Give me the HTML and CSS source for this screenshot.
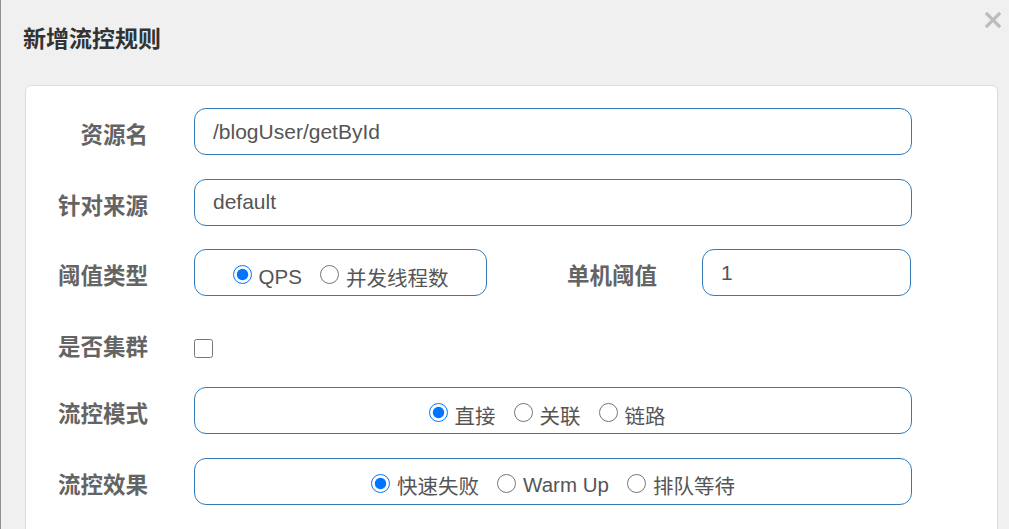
FILE: index.html
```html
<!DOCTYPE html>
<html lang="zh-CN">

<head>
  <meta charset="UTF-8">
  <meta name="viewport" content="width=device-width, initial-scale=1.0">
  <title>新增流控规则</title>
  <link rel="stylesheet" href="styles.css">
</head>

<body>
  <div class="modal">
    <div class="modal-header">
      <h3 class="modal-title">新增流控规则</h3>
      <button class="close-btn" type="button" aria-label="close">
        <svg width="16" height="16" viewBox="0 0 16 16">
          <path d="M2 2 L14 14 M14 2 L2 14" stroke="#bdbdbd" stroke-width="3.2" stroke-linecap="square" />
        </svg>
      </button>
    </div>
    <div class="panel">
      <div class="form-row">
        <label class="form-label">资源名</label>
        <input class="form-input" type="text" value="/blogUser/getById">
      </div>
      <div class="form-row">
        <label class="form-label">针对来源</label>
        <input class="form-input" type="text" value="default">
      </div>
      <div class="form-row">
        <label class="form-label">阈值类型</label>
        <div class="split">
          <div class="radio-box">
            <label class="radio"><input type="radio" name="grade" checked>QPS</label>
            <label class="radio"><input type="radio" name="grade">并发线程数</label>
          </div>
          <label class="form-label inner-label">单机阈值</label>
          <input class="form-input" type="text" value="1">
        </div>
      </div>
      <div class="form-row check-row">
        <label class="form-label">是否集群</label>
        <div><input class="checkbox" type="checkbox"></div>
      </div>
      <div class="form-row">
        <label class="form-label">流控模式</label>
        <div class="radio-box mode-box">
          <label class="radio"><input type="radio" name="strategy" checked>直接</label>
          <label class="radio"><input type="radio" name="strategy">关联</label>
          <label class="radio"><input type="radio" name="strategy">链路</label>
        </div>
      </div>
      <div class="form-row">
        <label class="form-label">流控效果</label>
        <div class="radio-box">
          <label class="radio"><input type="radio" name="behavior" checked>快速失败</label>
          <label class="radio"><input type="radio" name="behavior">Warm Up</label>
          <label class="radio"><input type="radio" name="behavior">排队等待</label>
        </div>
      </div>
    </div>
  </div>
</body>

</html>
```

FILE: styles.css
```css
html,
body {
  height: 100%;
}

body {
  margin: 0;
  background-color: #f0f0f0;
  font-family: "Liberation Sans", "Noto Sans CJK SC", sans-serif;
  overflow: hidden;
}

.modal {
  position: relative;
  height: 100%;
  border-left: 1px solid #8f8f8f;
  box-sizing: border-box;
}

.modal-header {
  padding: 22px 0 0 22px;
  height: 85px;
  box-sizing: border-box;
}

.modal-title {
  margin: 0;
  font-size: 23px;
  line-height: 34px;
  font-weight: bold;
  color: #333;
}

.close-btn {
  position: absolute;
  top: 12px;
  right: 8px;
  padding: 0;
  border: none;
  background: transparent;
  cursor: pointer;
}

.close-btn svg {
  display: block;
}

.panel {
  margin: 0 11px 0 24px;
  padding: 22px 85px 0 0;
  height: 600px;
  background-color: #fff;
  border: 1px solid #dcdcdc;
  border-radius: 6px;
}

.form-row {
  display: grid;
  grid-template-columns: 122px 1fr;
  column-gap: 46px;
  height: 47px;
  margin-bottom: 23.6px;
}

.check-row {
  height: 44px;
}

.form-label {
  padding-top: 12px;
  line-height: 32px;
  font-size: 22.5px;
  font-weight: bold;
  color: #646464;
  text-align: right;
  white-space: nowrap;
}

.form-input {
  width: 100%;
  height: 47px;
  box-sizing: border-box;
  padding: 0 18px;
  border: 1px solid #337ab7;
  border-radius: 12px;
  font-family: inherit;
  font-size: 21px;
  color: #555;
  background-color: #fff;
  outline: none;
}

.split {
  display: grid;
  grid-template-columns: 293px 215px 209px;
}

.inner-label {
  padding-right: 45px;
}

.radio-box {
  display: flex;
  justify-content: center;
  align-items: center;
  gap: 18px;
  height: 47px;
  box-sizing: border-box;
  padding-top: 8px;
  border: 1px solid #337ab7;
  border-radius: 12px;
}

.mode-box {
  padding-right: 12px;
}

.radio {
  display: flex;
  align-items: center;
  font-size: 20.5px;
  color: #555;
  white-space: nowrap;
}

.radio input {
  width: 19px;
  height: 19px;
  margin: 0 7px 4px 0;
}

.checkbox {
  width: 19px;
  height: 19px;
  margin: 19px 0 0 0;
}
```
